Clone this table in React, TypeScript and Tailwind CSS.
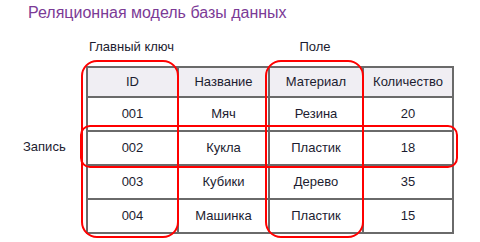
const columns = [
  { label: "ID", width: "w-[91px]" },
  { label: "Название", width: "w-[91px]" },
  { label: "Материал", width: "w-[94px]" },
  { label: "Количество", width: "w-[90px]" },
];

const rows = [
  ["001", "Мяч", "Резина", "20"],
  ["002", "Кукла", "Пластик", "18"],
  ["003", "Кубики", "Дерево", "35"],
  ["004", "Машинка", "Пластик", "15"],
];

export default function App() {
  return (
    <div className="relative h-[242px] w-[480px] overflow-hidden bg-white font-['Liberation_Sans',Arial,sans-serif] text-[#1c1c30]">
      <h1 className="h-[32px] pl-[28px] pt-[3px] text-[16px] leading-[20px] text-[#7b3a96]">
        Реляционная модель базы данных
      </h1>

      <div className="flex h-[30px] items-center pl-[86px] text-[13px]">
        <div className="w-[91px] text-center">Главный ключ</div>
        <div className="w-[91px]" />
        <div className="w-[94px] text-center">Поле</div>
      </div>

      <div className="mt-[4px] flex items-start">
        <div className="flex h-[166px] w-[86px] items-center pl-[23px] text-[13px]">
          <span className="-mt-[4px]">Запись</span>
        </div>
        <table className="border-collapse border-2 border-[#6a6a6a] text-[13px]">
          <thead>
            <tr className="h-[30px] bg-[#f0eef3]">
              {columns.map((c) => (
                <th key={c.label} className={`${c.width} border-2 border-[#6a6a6a] p-0 text-center font-normal`}>
                  {c.label}
                </th>
              ))}
            </tr>
          </thead>
          <tbody>
            {rows.map((r) => (
              <tr key={r[0]} className="h-[34px]">
                {r.map((cell, i) => (
                  <td key={i} className="border-2 border-[#6a6a6a] p-0 text-center">
                    {cell}
                  </td>
                ))}
              </tr>
            ))}
          </tbody>
        </table>
      </div>

      {/* red highlight rings */}
      <div className="absolute left-[81px] top-[60px] h-[178px] w-[98px] rounded-[16px] border-2 border-[#ff0000]" />
      <div className="absolute left-[265px] top-[60px] h-[178px] w-[99px] rounded-[16px] border-2 border-[#ff0000]" />
      <div className="absolute left-[80px] top-[125px] h-[43px] w-[378px] rounded-[10px] border-2 border-[#ff0000]" />
    </div>
  );
}
